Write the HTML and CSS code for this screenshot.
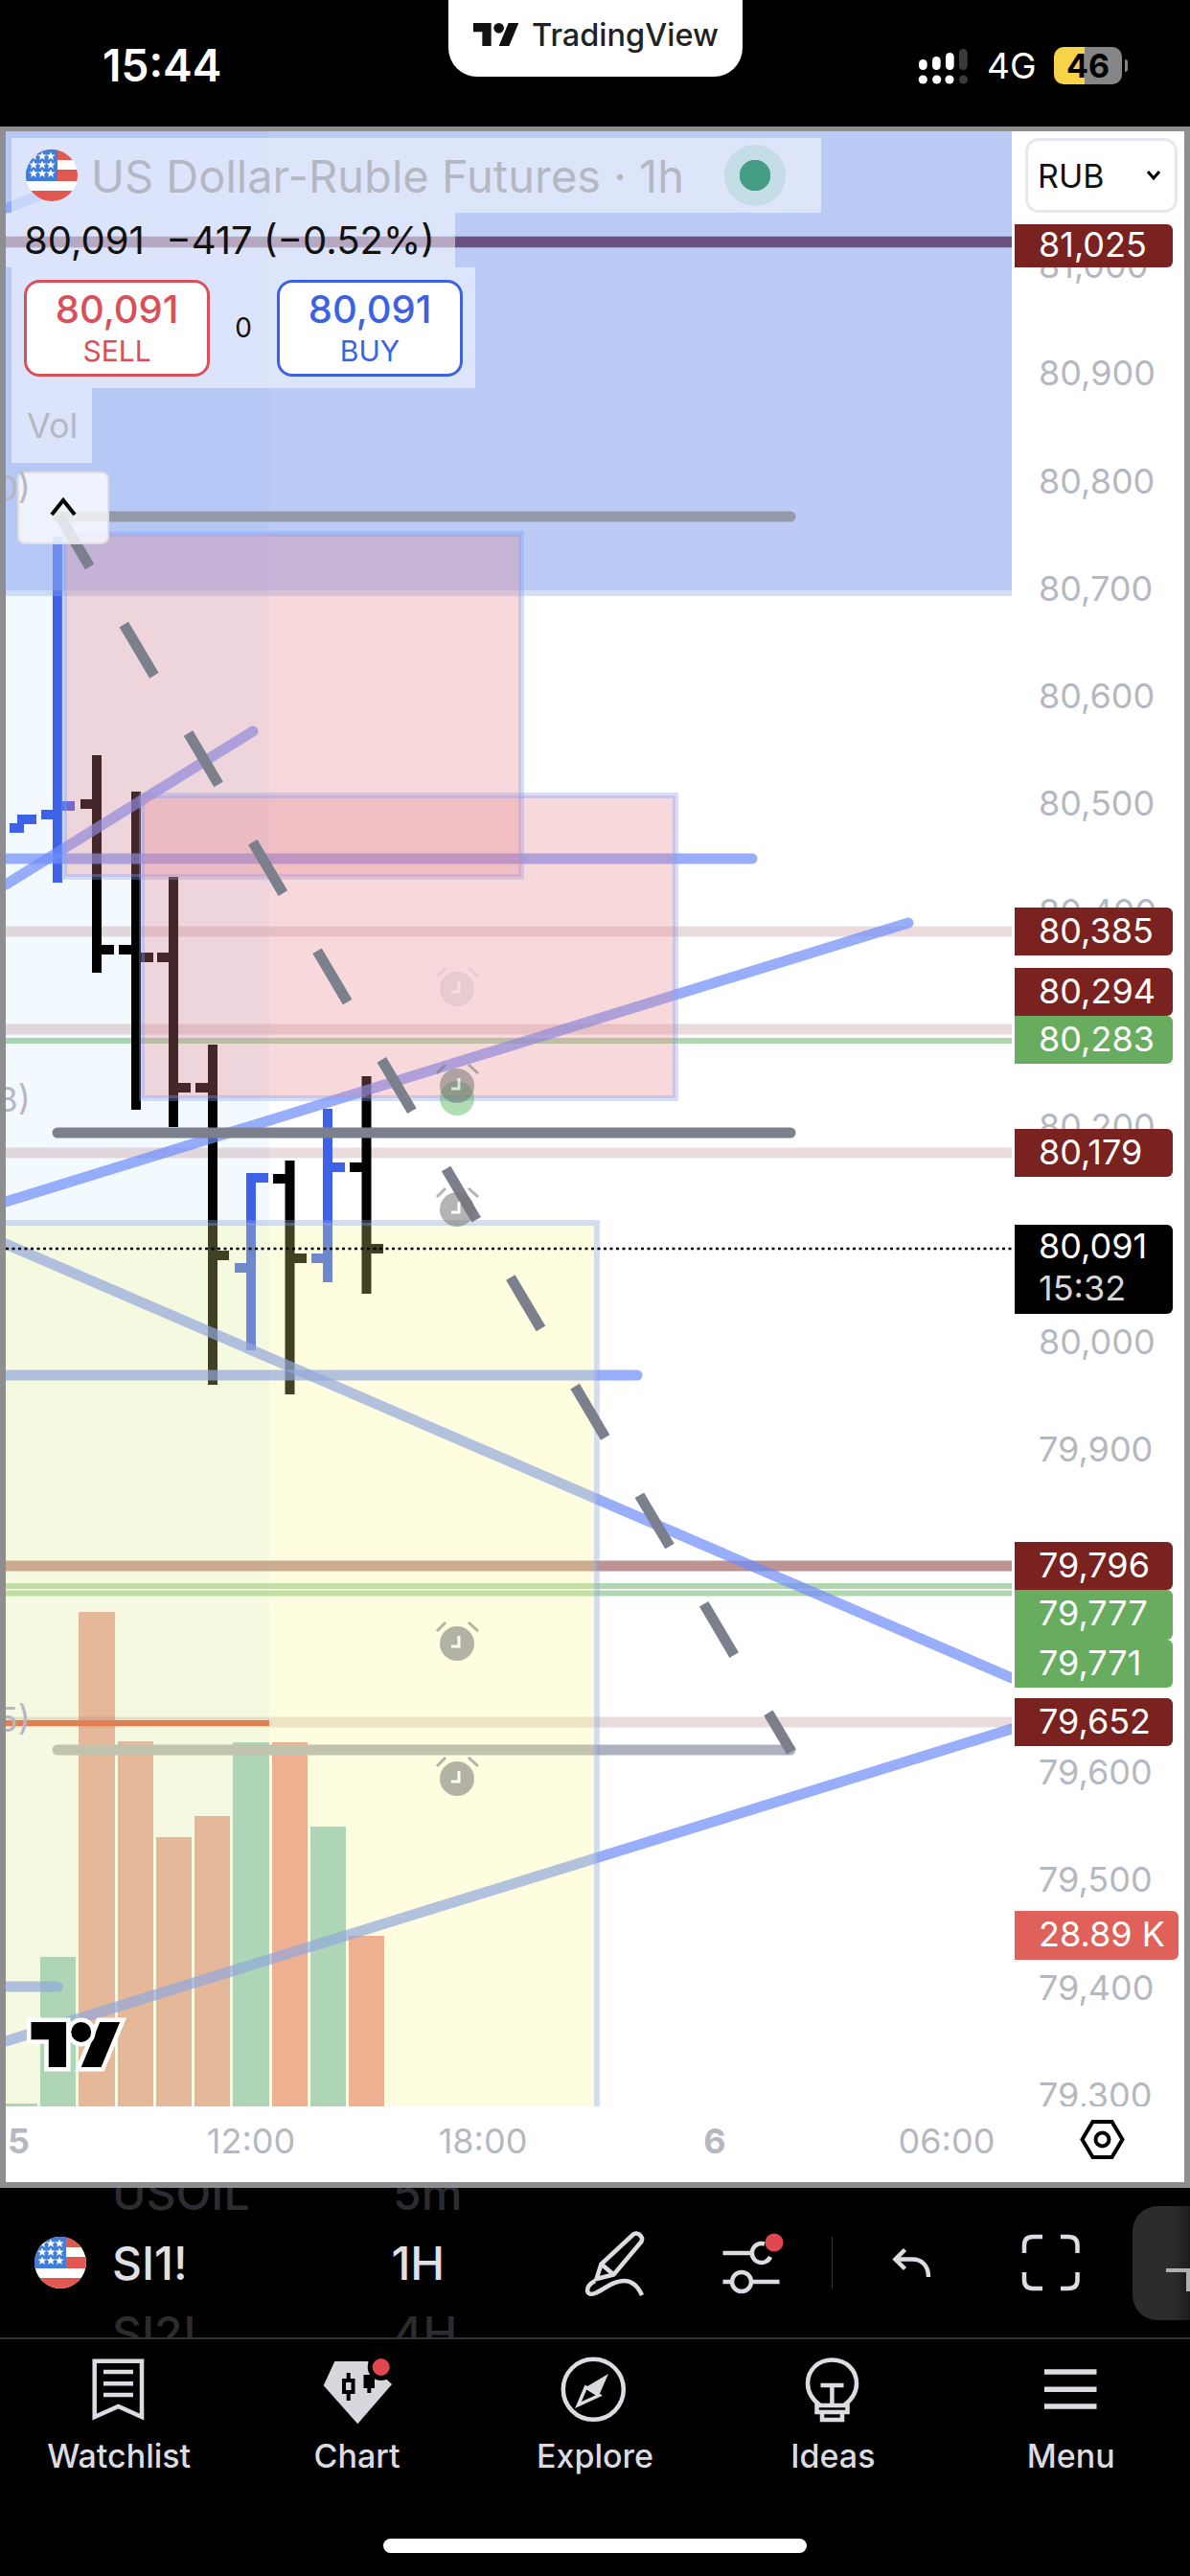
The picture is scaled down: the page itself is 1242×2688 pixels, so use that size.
FILE: index.html
```html
<!DOCTYPE html>
<html lang="en">
<head>
    <meta charset="UTF-8">
    <meta name="viewport" content="width=device-width, initial-scale=1.0">
    <title>TradingView Chart</title>
    <link rel="stylesheet" href="styles.css">
</head>
<body>
    <svg class="defs" width="0" height="0">
        <defs>
            <clipPath id="flagClip"><circle cx="27" cy="27" r="27"/></clipPath>
            <polygon id="star" points="0,-4.6 1.3,-1.5 4.6,-1.4 2,0.7 2.9,3.9 0,2 -2.9,3.9 -2,0.7 -4.6,-1.4 -1.3,-1.5" fill="#fff"/>
            <symbol id="usFlag" viewBox="0 0 54 54">
                <g clip-path="url(#flagClip)">
                    <rect width="54" height="54" fill="#fff"/>
                    <rect y="0" width="54" height="11" fill="#e0584f"/>
                    <rect y="21" width="54" height="12" fill="#e0584f"/>
                    <rect y="43" width="54" height="11" fill="#e0584f"/>
                    <rect width="33" height="33" fill="#3f7fd9"/>
                    <use href="#star" x="8" y="7"/><use href="#star" x="17" y="7"/><use href="#star" x="26" y="7"/>
                    <use href="#star" x="8" y="16"/><use href="#star" x="17" y="16"/><use href="#star" x="26" y="16"/>
                    <use href="#star" x="8" y="25"/><use href="#star" x="17" y="25"/><use href="#star" x="26" y="25"/>
                </g>
            </symbol>
            <symbol id="tvLogo" viewBox="0 4 36 18" overflow="visible">
                <path d="M14 22H7V11H0V4h14v18zM28 22h-8l7.5-18h8L28 22z"/><circle cx="20" cy="8" r="4"/>
            </symbol>
            <g id="alarm">
                <circle r="18"/>
                <path class="alarm-ears" d="M-21 -13L-12 -22M12 -22L22 -13"/>
                <path class="alarm-hands" d="M2 -8V3H-6"/>
            </g>
        </defs>
    </svg>

    <!-- Status bar -->
    <header class="status-bar">
        <div class="clock">15:44</div>
        <div class="app-pill">
            <svg class="app-logo"><use href="#tvLogo"/></svg>
            <span>TradingView</span>
        </div>
        <div class="status-right">
            <svg class="signal" viewBox="955 45 60 42">
                <g fill="#fff">
                    <rect x="959" y="60" width="8.7" height="11" rx="4.3"/>
                    <rect x="973" y="57" width="8.7" height="14" rx="4.3"/>
                    <rect x="987" y="53" width="8.7" height="18" rx="4.3"/>
                    <circle cx="963.3" cy="81" r="4.6"/>
                    <circle cx="977.7" cy="81" r="4.6"/>
                    <circle cx="991" cy="81" r="4.6"/>
                </g>
                <g fill="#3a3a3a">
                    <rect x="1001" y="49" width="8.7" height="22" rx="4.3"/>
                    <circle cx="1005.5" cy="81" r="4.6"/>
                </g>
            </svg>
            <span class="net">4G</span>
            <div class="battery">46</div>
        </div>
    </header>

    <!-- Chart -->
    <main class="chart-frame">
        <div class="chart-row">
            <div class="plot">
                <svg class="plot-canvas" viewBox="6 137 1050 2061">
                    <rect x="6" y="137" width="1050" height="2061" fill="#fff"/>
                    <rect x="6" y="137" width="275" height="2061" fill="#bee6ff" opacity="0.18"/>

                    <!-- volume -->
                    <rect x="6" y="2195" width="33" height="3" fill="#94c9c8"/>
                    <rect x="42" y="2042" width="37" height="156" fill="#94c9c8"/>
                    <rect x="82" y="1682" width="38" height="516" fill="#dea2a2"/>
                    <rect x="123" y="1817" width="37" height="381" fill="#dea2a2"/>
                    <rect x="163" y="1917" width="37" height="281" fill="#dea2a2"/>
                    <rect x="203" y="1895" width="37" height="303" fill="#dea2a2"/>
                    <rect x="243" y="1818" width="38" height="380" fill="#94c9c8"/>
                    <rect x="284" y="1818" width="37" height="380" fill="#ea9796"/>
                    <rect x="324" y="1906" width="37" height="292" fill="#94c9c8"/>
                    <rect x="364" y="2020" width="37" height="178" fill="#ea9796"/>

                    <!-- price lines -->
                    <g class="price-line pale">
                        <path d="M6 972H1056M6 1074H1056M6 1203H1056M6 1797H1056"/>
                    </g>
                    <path class="price-line strong" d="M6 1634H1056"/>
                    <path class="price-line green" d="M6 1086H1056M6 1655H1056M6 1662.5H1056"/>
                    <path class="red-line" d="M6 1798H281"/>

                    <!-- ohlc bars -->
                    <path class="bars blue" d="M10 864H25M18 855H38M60 560V921M43 850H60M60 841H78M262 1224V1409M245 1323H262M262 1229H280M342 1157V1338M325 1313H342M342 1218H360"/>
                    <path class="bars" d="M101 788V1015M84 839H101M101 991H119M142 826V1158M124 991H142M142 999H160M181 915V1176M164 999H181M181 1135H199M222 1090V1445M204 1135H222M222 1310H239M302.5 1211V1455M285 1230H302M302 1313H320M382.5 1123V1350M365 1218H382M382 1303H400"/>

                    <!-- trend lines -->
                    <g class="trend">
                        <path d="M6 218L60 196"/>
                        <path d="M6 923L264 763"/>
                        <path d="M6 896H785"/>
                        <path d="M6 1254L948 963"/>
                        <path d="M6 1298L1056 1751"/>
                        <path d="M6 1435H665"/>
                        <path d="M6 2130L1056 1804"/>
                        <path d="M6 2073H60"/>
                    </g>
                    <path class="gray-line" d="M60 1182H825" stroke="#7c7f8c"/>
                    <path class="gray-line" d="M60 1826H825" stroke="#adb1be"/>

                    <!-- zones -->
                    <rect class="zone-blue" x="6" y="137" width="1050" height="479"/>
                    <rect class="zone-blue-edge" x="6" y="616" width="1050" height="6"/>
                    <rect class="zone-pink" x="67" y="557" width="477" height="358"/>
                    <rect class="zone-pink" x="148" y="830" width="557" height="316"/>
                    <rect class="zone-yellow" x="0" y="1276" width="623" height="930"/>

                    <path class="gray-line" d="M60 539H825" stroke="#949aa8"/>
                    <path class="top-line" d="M6 252.500H1056"/>
                    <path class="dashes" d="M62 538L826 1828"/>
                    <path class="last-price" d="M6 1303H1056"/>

                    <!-- alerts -->
                    <circle cx="477" cy="1146" r="18" fill="#3caa46" opacity="0.4"/>
                    <use href="#alarm" x="477" y="1032" class="alarm faint"/>
                    <use href="#alarm" x="477" y="1133" class="alarm"/>
                    <use href="#alarm" x="477" y="1262" class="alarm"/>
                    <use href="#alarm" x="477" y="1715" class="alarm"/>
                    <use href="#alarm" x="477" y="1856" class="alarm"/>
                </svg>

                <!-- Legend -->
                <div class="legend">
                    <div class="legend-row title-row">
                        <svg class="flag"><use href="#usFlag"/></svg>
                        <span class="title">US Dollar-Ruble Futures · 1h</span>
                        <span class="live-dot"></span>
                    </div>
                    <div class="legend-row quote-row">80,091 &nbsp;−417 (−0.52%)</div>
                    <div class="legend-row trade-row">
                        <button class="trade sell"><b>80,091</b><span>SELL</span></button>
                        <span class="spread">0</span>
                        <button class="trade buy"><b>80,091</b><span>BUY</span></button>
                    </div>
                    <div class="legend-row vol-row">Vol</div>
                </div>
                <button class="collapse">
                    <svg viewBox="0 0 40 24" width="40" height="24"><path d="M8 20L20 5L32 20" fill="none" stroke="#000" stroke-width="4"/></svg>
                </button>
                <span class="cut-label cut-a">0)</span>
                <span class="cut-label cut-b">8)</span>
                <span class="cut-label cut-c">5)</span>
                <svg class="tv-mark"><use href="#tvLogo"/></svg>
            </div>

            <div class="price-axis">
                <div class="currency">RUB <svg viewBox="0 0 16 12" width="16" height="12"><path d="M2 2L8 9L14 2" fill="none" stroke="#000" stroke-width="3"/></svg></div>
                <div class="ticks">
                    <span>81,000</span><span>80,900</span><span>80,800</span><span>80,700</span><span>80,600</span>
                    <span>80,500</span><span>80,400</span><span></span><span>80,200</span><span></span>
                    <span>80,000</span><span>79,900</span><span></span><span></span><span>79,600</span>
                    <span>79,500</span><span>79,400</span><span>79,300</span>
                </div>
                <div class="tag dark p-81025">81,025</div>
                <div class="tag dark p-80385">80,385</div>
                <div class="tag dark p-80294">80,294</div>
                <div class="tag up p-80283">80,283</div>
                <div class="tag dark p-80179">80,179</div>
                <div class="tag last p-80091">80,091<small>15:32</small></div>
                <div class="tag dark p-79796">79,796</div>
                <div class="tag up p-79777">79,777</div>
                <div class="tag up p-79771">79,771</div>
                <div class="tag dark p-79652">79,652</div>
                <div class="tag vol p-vol">28.89 K</div>
            </div>
        </div>

        <div class="time-axis">
            <span class="time day first">5</span>
            <span class="time">12:00</span>
            <span class="time">18:00</span>
            <span class="time day">6</span>
            <span class="time">06:00</span>
            <svg class="gear" viewBox="1127 2221 47 43">
                <path d="M1129.5 2242.5L1140.5 2224H1160.5L1171.5 2242.5L1160.5 2261H1140.5Z" fill="none" stroke="#000" stroke-width="4"/>
                <circle cx="1150.5" cy="2242.5" r="7" fill="none" stroke="#000" stroke-width="4"/>
            </svg>
        </div>
    </main>

    <!-- Symbol toolbar -->
    <section class="toolbar">
        <span class="ghost ghost-sym ghost-top">USOIL</span>
        <span class="ghost ghost-int ghost-top">5m</span>
        <span class="ghost ghost-sym ghost-bottom">SI2!</span>
        <span class="ghost ghost-int ghost-bottom">4H</span>

        <svg class="flag"><use href="#usFlag"/></svg>
        <span class="symbol">SI1!</span>
        <span class="interval">1H</span>

        <svg class="tool pen" viewBox="608 2322 68 74">
            <path d="M662 2329.5C666 2326 673 2332 670.5 2337L641.500 2371.500L623.500 2376L628.500 2360.500Z"/>
            <path d="M628.500 2360.500L641.500 2371.500"/>
            <path d="M622 2378C611 2384 612 2395 622 2391C632 2387 640 2378 652 2378C661 2378 667 2384 671 2393"/>
        </svg>
        <svg class="tool sliders" viewBox="750 2325 70 66">
            <path d="M755.500 2348H785.400"/>
            <path d="M799 2338.500A10 10 0 1 0 805 2352"/>
            <path d="M755.500 2378H765M785 2378H814.500"/>
            <circle cx="775" cy="2378" r="10"/>
            <circle class="dot" cx="809" cy="2337" r="9.500"/>
        </svg>
        <span class="tool-sep"></span>
        <svg class="tool undo" viewBox="930 2342 46 38">
            <path d="M945.500 2347.500L935.500 2357.500L945.500 2367.500"/>
            <path d="M936 2357.500H953C964 2357.500 970 2365 970 2376"/>
        </svg>
        <svg class="tool full" viewBox="1065 2329 66 64">
            <path d="M1070 2351V2343C1070 2337 1073 2334 1079 2334H1089"/>
            <path d="M1108 2334H1116C1122 2334 1125.500 2337 1125.500 2343V2351"/>
            <path d="M1070 2371V2379C1070 2385 1073 2388 1079 2388H1089"/>
            <path d="M1108 2388H1116C1122 2388 1125.500 2385 1125.500 2379V2371"/>
        </svg>
        <div class="handle"></div>
    </section>

    <!-- Tab bar -->
    <nav class="tabs">
        <div class="tab">
            <svg class="tab-icon" viewBox="84 2458 80 76">
                <path class="ln" d="M98.700 2463.700H148V2522L123.500 2511L98.700 2522Z"/>
                <path class="ln" d="M108 2475H139M108 2487.300H139M108 2499H139"/>
            </svg>
            <span>Watchlist</span>
        </div>
        <div class="tab">
            <svg class="tab-icon" viewBox="332 2458 80 76">
                <path class="solid" d="M348.300 2464H383L408 2488L372.300 2529.300L336.700 2489.300Z"/>
                <path class="bk" d="M362.700 2476V2483M362.700 2497V2505"/>
                <rect class="bk-box" x="358" y="2484" width="9.500" height="12"/>
                <path class="bk" d="M384.300 2480V2497M380.500 2480H388V2490H380.500Z"/>
                <circle cx="396.700" cy="2470" r="14" fill="#000"/>
                <circle class="dot" cx="396.700" cy="2470" r="9"/>
            </svg>
            <span>Chart</span>
        </div>
        <div class="tab">
            <svg class="tab-icon" viewBox="581 2458 80 76">
                <circle class="ln" cx="619.300" cy="2493.300" r="31.500"/>
                <path class="solid" d="M635 2477L611.400 2491L625.200 2499.500Z"/>
                <path class="ln thin" d="M611.400 2491L603.500 2509.500L625.200 2499.500Z"/>
            </svg>
            <span>Explore</span>
        </div>
        <div class="tab">
            <svg class="tab-icon" viewBox="829 2458 80 76">
                <path class="ln" d="M856 2510C848 2504 843 2496 843 2487C843 2473 854 2462.500 868.400 2462.500C883 2462.500 894 2473 894 2487C894 2496 889 2504 881 2510"/>
                <path class="ln" d="M852.500 2510H884.500V2517H852.500ZM858 2517H879V2525H858ZM856.500 2489H880.500M868.400 2489V2510"/>
            </svg>
            <span>Ideas</span>
        </div>
        <div class="tab">
            <svg class="tab-icon" viewBox="1078 2458 80 76">
                <path class="ln thick" d="M1090 2475H1144.500M1090 2493.300H1144.500M1090 2511H1144.500"/>
            </svg>
            <span>Menu</span>
        </div>
    </nav>
    <div class="home-bar"><span></span></div>
</body>
</html>
```

FILE: styles.css
```css
* {
    box-sizing: border-box;
}

body {
    font-family: 'Inter', 'Liberation Sans', sans-serif;
    background: #000;
    margin: 0;
    width: 1242px;
    height: 2688px;
    overflow: hidden;
}

.defs {
    position: absolute;
}

/* Status bar */
.status-bar {
    display: flex;
    height: 132px;
    color: #fff;
}

.clock {
    width: 468px;
    padding: 41px 0 0 107px;
    font-size: 46px;
    line-height: 54px;
    font-weight: 600;
}

.app-pill {
    display: flex;
    align-items: center;
    gap: 13px;
    width: 307px;
    height: 80px;
    padding: 0 0 8px 26px;
    background: #fff;
    border-radius: 0 0 30px 30px;
    color: #222;
    font-size: 32.500px;
    font-weight: 500;
}

.app-logo {
    width: 48px;
    height: 24px;
    fill: #111;
}

.status-right {
    display: flex;
    align-items: center;
    height: 136px;
    padding-left: 180px;
}

.signal {
    width: 60px;
    height: 42px;
}

.net {
    width: 85px;
    padding-left: 15px;
    font-size: 37px;
}

.battery {
    position: relative;
    width: 71px;
    height: 39px;
    border-radius: 10px;
    background: linear-gradient(90deg, #f6d44a 0 32px, #868686 32px);
    color: #000;
    font-size: 34px;
    line-height: 39px;
    font-weight: 700;
    text-align: center;
}

.battery::after {
    content: "";
    position: absolute;
    left: 74px;
    top: 13px;
    width: 3px;
    height: 13px;
    border-radius: 0 3px 3px 0;
    background: #868686;
}

/* Chart frame */
.chart-frame {
    height: 2151px;
    border: 6px solid #8e8e90;
    border-top-width: 5px;
    background: #fff;
}

.chart-row {
    display: flex;
    height: 2061px;
}

.plot {
    position: relative;
    width: 1050px;
    overflow: hidden;
}

.plot-canvas {
    display: block;
    width: 1050px;
    height: 2061px;
}

.price-line {
    fill: none;
}

.price-line.pale path {
    stroke: #7a2526;
    stroke-width: 11;
    stroke-opacity: 0.16;
}

.price-line.strong {
    stroke: #7a2526;
    stroke-width: 11;
    stroke-opacity: 0.5;
}

.price-line.green {
    stroke: #46a046;
    stroke-width: 6;
    stroke-opacity: 0.42;
}

.red-line {
    stroke: #d85545;
    stroke-width: 6;
}

.top-line {
    stroke: #6b5180;
    stroke-width: 11.500;
}

.bars {
    fill: none;
    stroke: #000;
    stroke-width: 10;
}

.bars.blue {
    stroke: #3d62e8;
}

.trend path {
    fill: none;
    stroke: #6e8cfa;
    stroke-width: 11;
    stroke-opacity: 0.7;
    stroke-linecap: round;
}

.gray-line {
    fill: none;
    stroke-width: 11;
    stroke-linecap: round;
}

.zone-blue {
    fill: #8da8f0;
    opacity: 0.6;
}

.zone-blue-edge {
    fill: #8da8f0;
    opacity: 0.38;
}

.zone-pink {
    fill: rgba(230, 130, 140, 0.3);
    stroke: rgba(130, 160, 250, 0.35);
    stroke-width: 6;
}

.zone-yellow {
    fill: rgba(250, 248, 130, 0.26);
    stroke: rgba(130, 160, 250, 0.35);
    stroke-width: 6;
}

.dashes {
    fill: none;
    stroke: #7c7f8c;
    stroke-width: 11;
    stroke-dasharray: 62 70;
}

.last-price {
    fill: none;
    stroke: #000;
    stroke-width: 2.5;
    stroke-dasharray: 3 3.5;
}

.alarm {
    fill: #777;
    opacity: 0.55;
}

.alarm.faint {
    opacity: 0.12;
}

.alarm-ears {
    fill: none;
    stroke: #777;
    stroke-width: 3;
}

.alarm-hands {
    fill: none;
    stroke: #fff;
    stroke-width: 3;
}

/* Legend */
.legend {
    position: absolute;
    left: 0;
    top: 7px;
    display: flex;
    flex-direction: column;
    align-items: flex-start;
}

.legend-row {
    background: rgba(255, 255, 255, 0.5);
}

.flag {
    flex: none;
    width: 54px;
    height: 54px;
}

.title-row {
    display: flex;
    align-items: center;
    width: 845px;
    height: 78px;
    margin-left: 6px;
    padding-left: 15px;
}

.title {
    width: 675px;
    padding-left: 14px;
    color: #b5b8c3;
    font-size: 47px;
    white-space: nowrap;
}

.live-dot {
    width: 64px;
    height: 64px;
    border-radius: 50%;
    background: #c5dde6 radial-gradient(circle, #459c85 0 16px, transparent 16.500px);
}

.quote-row {
    width: 469px;
    height: 57px;
    padding-left: 19px;
    color: #111;
    font-size: 40px;
    line-height: 57px;
    white-space: nowrap;
}

.trade-row {
    display: flex;
    align-items: center;
    width: 484px;
    height: 126px;
    margin-left: 6px;
    padding-left: 13px;
}

.trade {
    display: flex;
    flex-direction: column;
    align-items: center;
    justify-content: center;
    gap: 3px;
    width: 194px;
    height: 101px;
    padding: 0;
    background: #fff;
    border: 3px solid;
    border-radius: 16px;
    font-family: inherit;
}

.trade b {
    font-size: 40px;
    line-height: 44px;
    font-weight: 500;
}

.trade span {
    font-size: 30px;
    line-height: 36px;
}

.sell {
    border-color: #d8505a;
    color: #d8505a;
}

.buy {
    border-color: #3d62e0;
    color: #3d62e0;
}

.spread {
    width: 70px;
    color: #111;
    font-size: 28px;
    text-align: center;
}

.vol-row {
    width: 84px;
    height: 78px;
    margin-left: 6px;
    padding-left: 16px;
    color: #b5b8c3;
    font-size: 36px;
    line-height: 78px;
}

.collapse {
    position: absolute;
    left: 12px;
    top: 355px;
    width: 96px;
    height: 76px;
    padding: 0;
    background: rgba(255, 255, 255, 0.78);
    border: 2px solid rgba(220, 220, 226, 0.9);
    border-radius: 8px;
}

.cut-label {
    position: absolute;
    right: 1024px;
    color: #b5b8c3;
    font-size: 36px;
    line-height: 44px;
}

.cut-a { top: 350px; }
.cut-b { top: 988px; }
.cut-c { top: 1635px; }

.tv-mark {
    position: absolute;
    left: 26px;
    top: 1973px;
    width: 95px;
    height: 47px;
    fill: #000;
    stroke: #fff;
    stroke-width: 3.500;
    paint-order: stroke;
    overflow: visible;
}

/* Price axis */
.price-axis {
    position: relative;
    width: 180px;
    overflow: hidden;
    color: #b5b8c0;
    font-size: 36px;
}

.ticks {
    display: flex;
    flex-direction: column;
    padding: 84px 0 0 28px;
}

.ticks span {
    height: 112.300px;
    line-height: 112.300px;
}

.currency {
    position: absolute;
    z-index: 2;
    left: 14px;
    top: 7px;
    display: flex;
    align-items: center;
    justify-content: space-between;
    width: 159px;
    height: 78px;
    padding: 0 14px 0 10px;
    background: #fff;
    border: 3px solid #e6e8ee;
    border-radius: 14px;
    color: #111;
    font-size: 34px;
}

.tag {
    position: absolute;
    left: 3px;
    width: 165px;
    height: 50px;
    padding-left: 25px;
    border-radius: 0 6px 6px 0;
    color: #fff;
    line-height: 48px;
}

.tag.dark { background: #79221f; }
.tag.up { background: #68ad5f; }

.tag.last {
    height: 93px;
    background: #000;
    line-height: 44px;
    padding-top: 0;
}

.tag small {
    display: block;
    color: #d6d6d6;
    font-size: 36px;
    line-height: 44px;
}

.tag.vol {
    width: 171px;
    background: #e0615a;
}

.p-81025 { top: 97px; height: 45px; line-height: 43px; }
.p-80385 { top: 810px; }
.p-80294 { top: 873px; }
.p-80283 { top: 923px; }
.p-80179 { top: 1041px; }
.p-80091 { top: 1141px; }
.p-79796 { top: 1472px; }
.p-79777 { top: 1522px; height: 52px; }
.p-79771 { top: 1574px; }
.p-79652 { top: 1635px; }
.p-vol { top: 1857px; height: 51px; }

/* Time axis */
.time-axis {
    display: flex;
    align-items: center;
    height: 79px;
    color: #b5b8c0;
    font-size: 36px;
}

.time {
    width: 242px;
    padding-bottom: 8px;
    text-align: center;
}

.time.day {
    font-weight: 700;
}

.time.first {
    width: 135px;
    padding-left: 2px;
    text-align: left;
}

.gear {
    width: 47px;
    height: 43px;
    margin: 0 0 11px 18px;
}

/* Toolbar */
.toolbar {
    position: relative;
    display: flex;
    align-items: center;
    height: 156px;
    padding-left: 36px;
    overflow: hidden;
    color: #e0e0e4;
    font-size: 48px;
    font-weight: 500;
}

.ghost {
    position: absolute;
    color: #2c2c30;
    line-height: 54px;
}

.ghost-sym { left: 117px; }
.ghost-int { left: 410px; }
.ghost-top { top: -21px; }
.ghost-bottom { top: 125px; }

.symbol {
    width: 293px;
    margin-left: 27px;
}

.interval {
    width: 200px;
}

.tool {
    flex: none;
    fill: none;
    stroke: #dcdde2;
    stroke-width: 4.500;
}

.dot {
    fill: #e0474f;
    stroke: none;
}

.pen {
    width: 68px;
    height: 74px;
}

.sliders {
    width: 70px;
    height: 66px;
    margin-left: 74px;
}

.tool-sep {
    width: 1px;
    height: 54px;
    margin-left: 49px;
    background: #38383a;
}

.undo {
    width: 46px;
    height: 38px;
    margin: 0 0 0 60px;
}

.full {
    width: 66px;
    height: 64px;
    margin-left: 89px;
}

.handle {
    width: 60px;
    height: 119px;
    margin-left: 52px;
    background: linear-gradient(90deg, #2c2c2e 70%, #1c1c1c);
    border-radius: 26px 0 0 26px;
    position: relative;
}

.handle::after {
    content: "";
    position: absolute;
    left: 35px;
    top: 65px;
    width: 21px;
    height: 20px;
    border-top: 4px solid #b0b0b0;
    border-right: 4px solid #b0b0b0;
}

/* Tab bar */
.tabs {
    display: grid;
    grid-template-columns: repeat(5, 1fr);
    border-top: 2px solid #333;
    height: 210px;
    padding-top: 17px;
}

.tab {
    display: flex;
    flex-direction: column;
    align-items: center;
    color: #dcdce0;
    font-size: 34px;
    font-weight: 500;
}

.tab-icon {
    width: 80px;
    height: 76px;
    margin-bottom: 8px;
}

.ln {
    fill: none;
    stroke: #dcdde2;
    stroke-width: 4.500;
}

.ln.thin { stroke-width: 3.500; }
.ln.thick { stroke-width: 5.500; }

.solid { fill: #d6d8de; }

.bk {
    fill: #000;
    stroke: #000;
    stroke-width: 4;
}

.bk-box {
    fill: none;
    stroke: #000;
    stroke-width: 4;
}

.home-bar {
    display: flex;
    justify-content: center;
    padding-top: 0;
}

.home-bar span {
    width: 442px;
    height: 15px;
    border-radius: 8px;
    background: #fff;
}
```
